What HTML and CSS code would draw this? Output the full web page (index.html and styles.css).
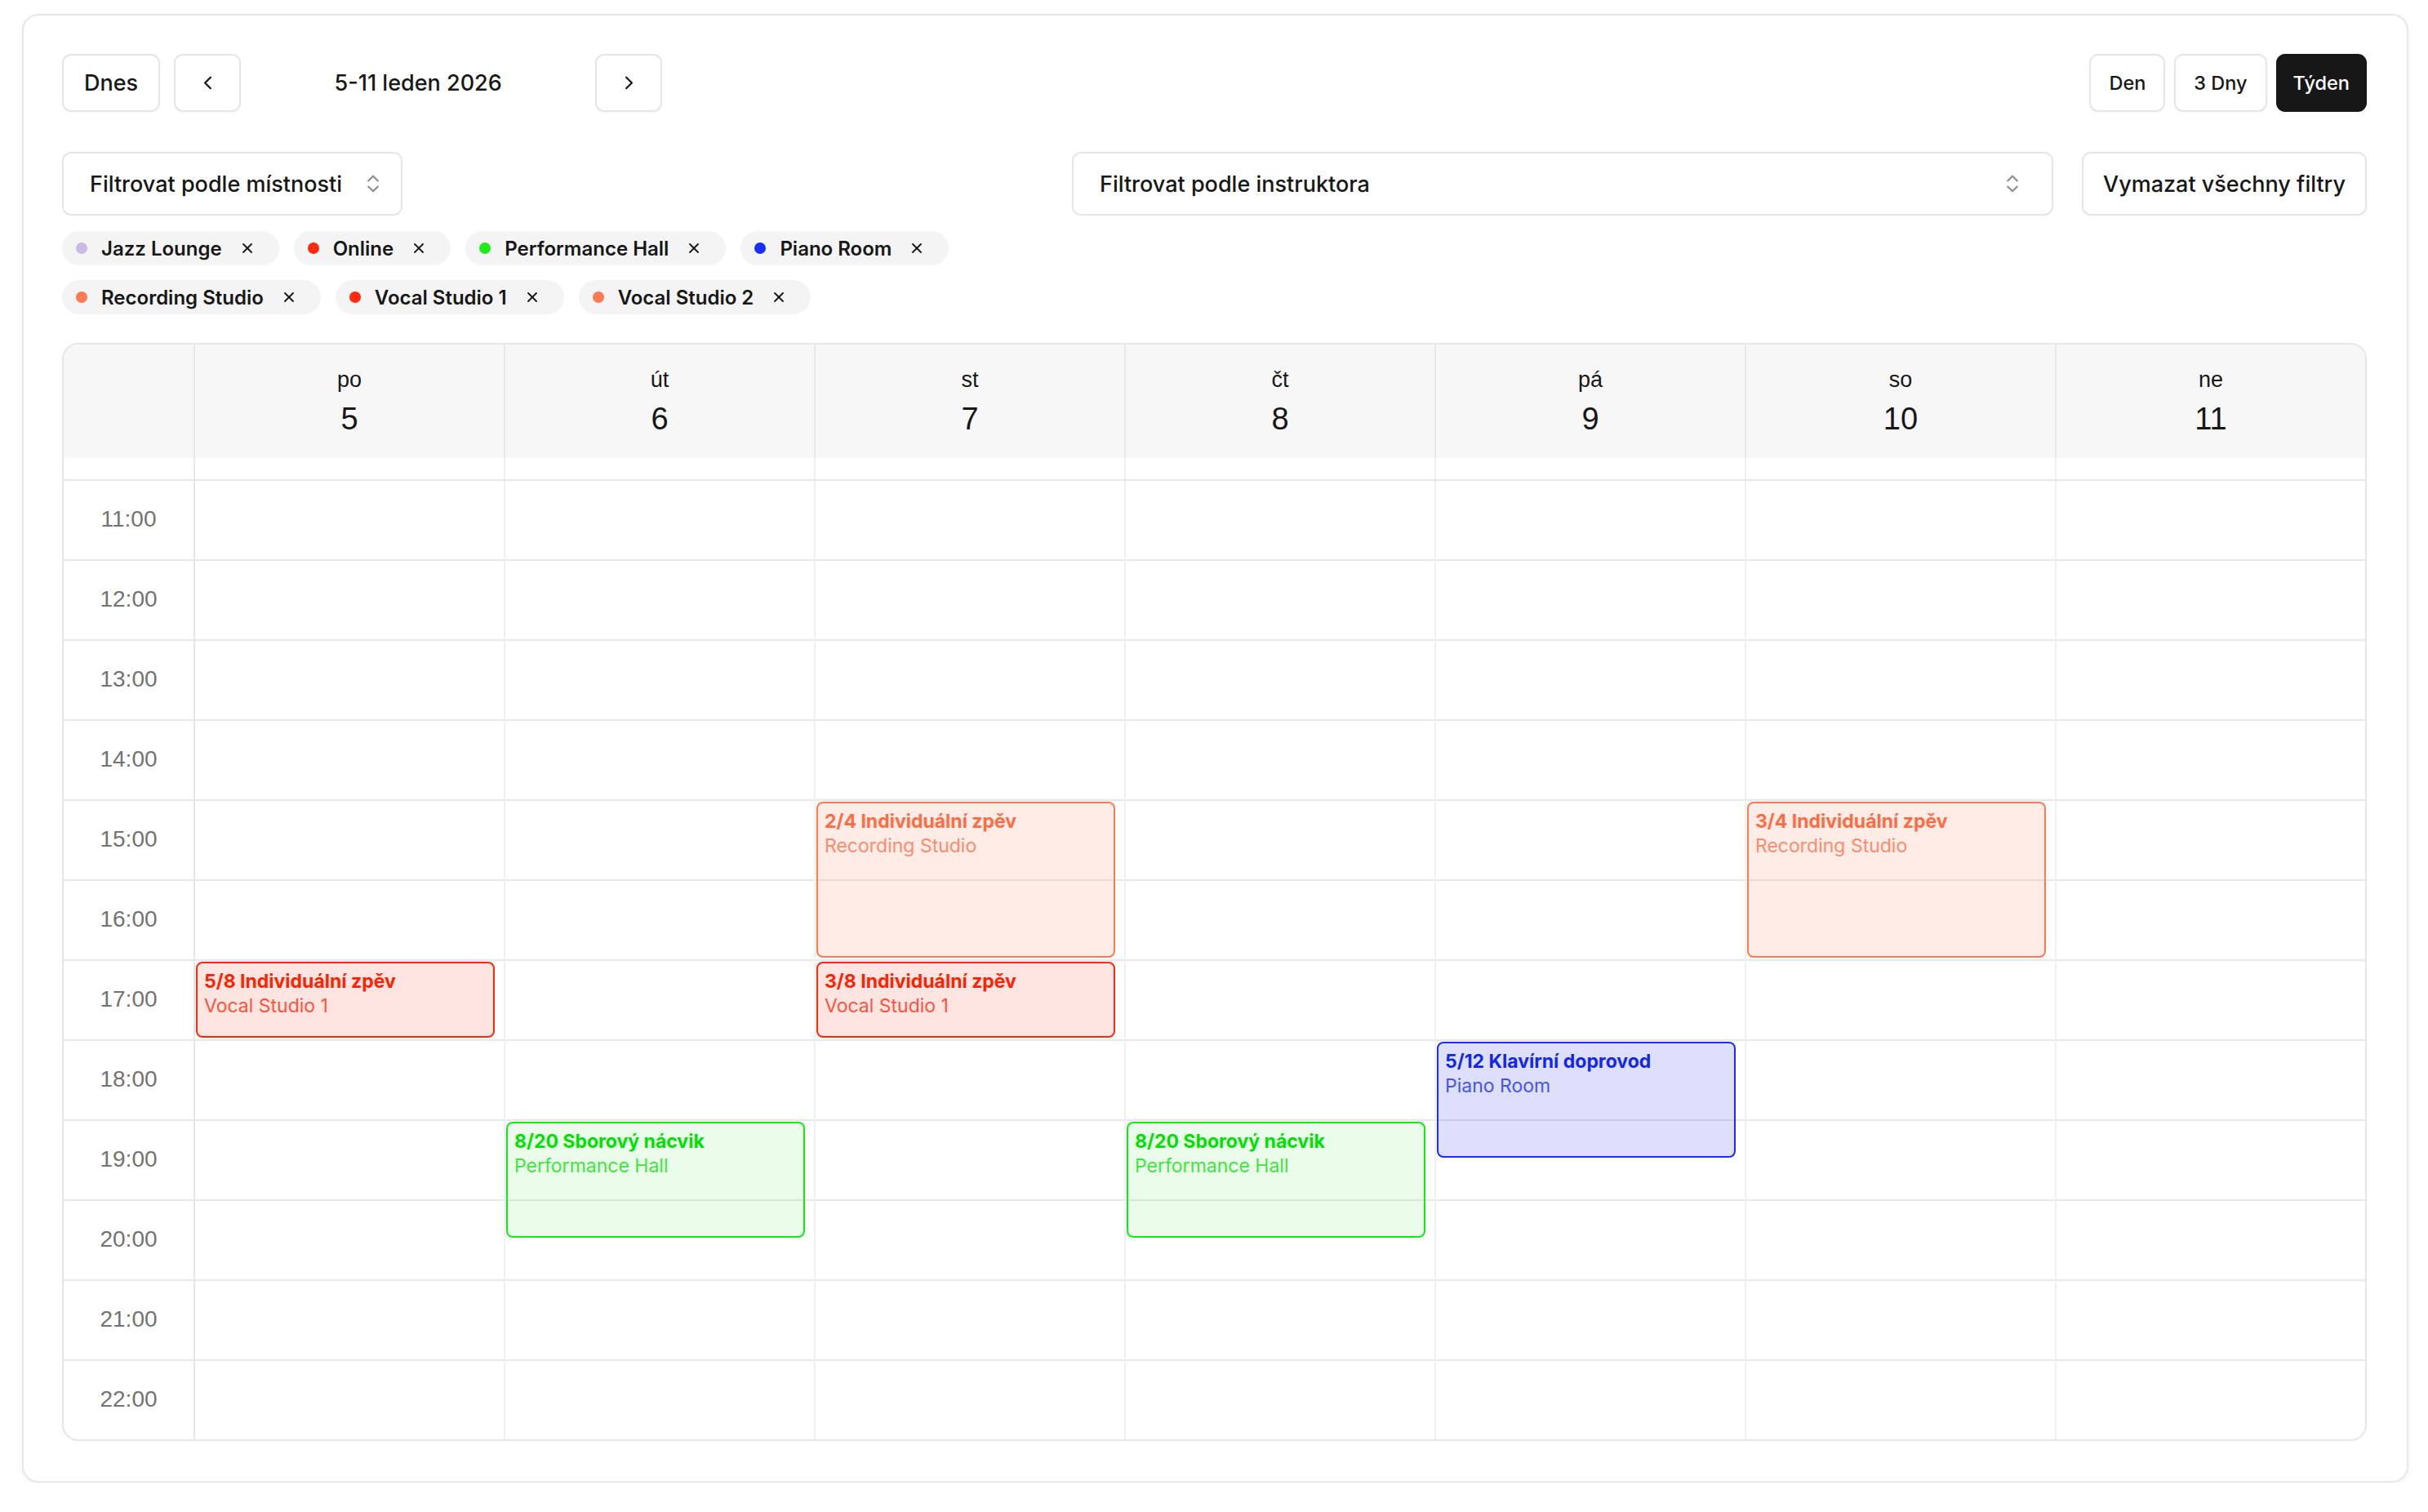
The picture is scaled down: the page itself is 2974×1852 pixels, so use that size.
FILE: index.html
```html
<!DOCTYPE html>
<html lang="cs">
<head>
  <meta charset="UTF-8" />
  <meta name="viewport" content="width=device-width, initial-scale=1.0"/>
  <title>Rozvrh</title>
  <link rel="stylesheet" href="styles.css">
</head>
<body>
  <div class="card">
    <!-- Navigation -->
    <div class="toolbar">
      <div class="nav">
        <button class="btn">Dnes</button>
        <button class="btn icon-btn">
          <svg width="27" height="27" viewBox="0 0 24 24" fill="none" stroke="currentColor" stroke-width="2" stroke-linecap="round" stroke-linejoin="round"><path d="m15 18-6-6 6-6"/></svg>
        </button>
        <div class="range">5-11 leden 2026</div>
        <button class="btn icon-btn">
          <svg width="27" height="27" viewBox="0 0 24 24" fill="none" stroke="currentColor" stroke-width="2" stroke-linecap="round" stroke-linejoin="round"><path d="m9 18 6-6-6-6"/></svg>
        </button>
      </div>
      <div class="views">
        <button class="btn view">Den</button>
        <button class="btn view">3 Dny</button>
        <button class="btn view active">Týden</button>
      </div>
    </div>

    <!-- Filtres -->
    <div class="filters">
      <div class="select room-select">
        <span>Filtrovat podle místnosti</span>
        <svg class="updown" width="28" height="28" viewBox="0 0 24 24" fill="none" stroke="currentColor" stroke-width="1.8" stroke-linecap="round" stroke-linejoin="round"><path d="m7 15 5 5 5-5"/><path d="m7 9 5-5 5 5"/></svg>
      </div>
      <div class="select instructor-select">
        <span>Filtrovat podle instruktora</span>
        <svg class="updown" width="28" height="28" viewBox="0 0 24 24" fill="none" stroke="currentColor" stroke-width="1.8" stroke-linecap="round" stroke-linejoin="round"><path d="m7 15 5 5 5-5"/><path d="m7 9 5-5 5 5"/></svg>
      </div>
      <button class="btn clear">Vymazat všechny filtry</button>
    </div>

    <div class="chips">
      <div class="chip"><span class="dot c-jazz"></span>Jazz Lounge<svg class="x" viewBox="0 0 24 24" fill="none" stroke="currentColor" stroke-width="2.2" stroke-linecap="round"><path d="M18 6 6 18"/><path d="m6 6 12 12"/></svg></div>
      <div class="chip"><span class="dot c-red"></span>Online<svg class="x" viewBox="0 0 24 24" fill="none" stroke="currentColor" stroke-width="2.2" stroke-linecap="round"><path d="M18 6 6 18"/><path d="m6 6 12 12"/></svg></div>
      <div class="chip"><span class="dot c-green"></span>Performance Hall<svg class="x" viewBox="0 0 24 24" fill="none" stroke="currentColor" stroke-width="2.2" stroke-linecap="round"><path d="M18 6 6 18"/><path d="m6 6 12 12"/></svg></div>
      <div class="chip"><span class="dot c-blue"></span>Piano Room<svg class="x" viewBox="0 0 24 24" fill="none" stroke="currentColor" stroke-width="2.2" stroke-linecap="round"><path d="M18 6 6 18"/><path d="m6 6 12 12"/></svg></div>
      <div class="chip"><span class="dot c-coral"></span>Recording Studio<svg class="x" viewBox="0 0 24 24" fill="none" stroke="currentColor" stroke-width="2.2" stroke-linecap="round"><path d="M18 6 6 18"/><path d="m6 6 12 12"/></svg></div>
      <div class="chip"><span class="dot c-red"></span>Vocal Studio 1<svg class="x" viewBox="0 0 24 24" fill="none" stroke="currentColor" stroke-width="2.2" stroke-linecap="round"><path d="M18 6 6 18"/><path d="m6 6 12 12"/></svg></div>
      <div class="chip"><span class="dot c-coral"></span>Vocal Studio 2<svg class="x" viewBox="0 0 24 24" fill="none" stroke="currentColor" stroke-width="2.2" stroke-linecap="round"><path d="M18 6 6 18"/><path d="m6 6 12 12"/></svg></div>
    </div>

    <!-- Calendrier de la semaine -->
    <div class="calendar">
      <div class="cal-row cal-head">
        <div class="gutter"></div>
        <div class="day-head"><div class="dname">po</div><div class="dnum">5</div></div>
        <div class="day-head"><div class="dname">út</div><div class="dnum">6</div></div>
        <div class="day-head"><div class="dname">st</div><div class="dnum">7</div></div>
        <div class="day-head"><div class="dname">čt</div><div class="dnum">8</div></div>
        <div class="day-head"><div class="dname">pá</div><div class="dnum">9</div></div>
        <div class="day-head"><div class="dname">so</div><div class="dnum">10</div></div>
        <div class="day-head"><div class="dname">ne</div><div class="dnum">11</div></div>
      </div>

      <div class="cal-row cal-allday">
        <div class="gutter"></div>
        <div class="allday"></div><div class="allday"></div><div class="allday"></div><div class="allday"></div>
        <div class="allday"></div><div class="allday"></div><div class="allday"></div>
      </div>

      <div class="cal-row cal-body">
        <div class="time-col">
          <div class="time">11:00</div><div class="time">12:00</div><div class="time">13:00</div>
          <div class="time">14:00</div><div class="time">15:00</div><div class="time">16:00</div>
          <div class="time">17:00</div><div class="time">18:00</div><div class="time">19:00</div>
          <div class="time">20:00</div><div class="time">21:00</div><div class="time">22:00</div>
        </div>

        <!-- po -->
        <div class="day-col">
          <div class="event ev-vocal" style="top: 589px; height: 93px;">
            <div class="ev-title">5/8 Individuální zpěv</div>
            <div class="ev-room">Vocal Studio 1</div>
          </div>
        </div>
        <!-- út -->
        <div class="day-col">
          <div class="event ev-hall" style="top: 785px; height: 142px;">
            <div class="ev-title">8/20 Sborový nácvik</div>
            <div class="ev-room">Performance Hall</div>
          </div>
        </div>
        <!-- st -->
        <div class="day-col">
          <div class="event ev-recording" style="top: 393px; height: 191px;">
            <div class="ev-title">2/4 Individuální zpěv</div>
            <div class="ev-room">Recording Studio</div>
          </div>
          <div class="event ev-vocal" style="top: 589px; height: 93px;">
            <div class="ev-title">3/8 Individuální zpěv</div>
            <div class="ev-room">Vocal Studio 1</div>
          </div>
        </div>
        <!-- čt -->
        <div class="day-col">
          <div class="event ev-hall" style="top: 785px; height: 142px;">
            <div class="ev-title">8/20 Sborový nácvik</div>
            <div class="ev-room">Performance Hall</div>
          </div>
        </div>
        <!-- pá -->
        <div class="day-col">
          <div class="event ev-piano" style="top: 687px; height: 142px;">
            <div class="ev-title">5/12 Klavírní doprovod</div>
            <div class="ev-room">Piano Room</div>
          </div>
        </div>
        <!-- so -->
        <div class="day-col">
          <div class="event ev-recording" style="top: 393px; height: 191px;">
            <div class="ev-title">3/4 Individuální zpěv</div>
            <div class="ev-room">Recording Studio</div>
          </div>
        </div>
        <!-- ne -->
        <div class="day-col"></div>
      </div>
    </div>
  </div>
</body>
</html>
```

FILE: styles.css
```css
/* Base */
body {
  margin: 0;
  font-family: Inter, "Liberation Sans", sans-serif;
  color: #171717;
  background: #fff;
}

* {
  box-sizing: border-box;
}

/* Carte principale */
.card {
  margin: 17px 24px 0 27px;
  border: 2px solid #e7e7e7;
  border-radius: 20px;
  padding: 47px 49px 49px 47px;
  box-shadow: 0 3px 8px rgba(0, 0, 0, 0.05);
}

/* Barre du haut */
.toolbar {
  display: flex;
  justify-content: space-between;
  align-items: center;
  height: 71px;
}

.nav {
  display: flex;
  align-items: center;
  gap: 17px;
}

.btn {
  height: 71px;
  padding: 0 25px;
  border: 2px solid #e6e6e6;
  border-radius: 11px;
  background: #fff;
  color: #171717;
  font-family: Inter, sans-serif;
  font-size: 27px;
  font-weight: 500;
  box-shadow: 0 1px 2px rgba(0, 0, 0, 0.04);
  cursor: pointer;
}

.icon-btn {
  width: 82px;
  padding: 0;
  display: flex;
  align-items: center;
  justify-content: center;
}

.range {
  width: 400px;
  text-align: center;
  font-size: 27px;
  font-weight: 500;
}

.views {
  display: flex;
  gap: 11px;
}

.btn.view {
  font-size: 23.5px;
  padding: 0 22px;
}

.btn.view.active {
  padding: 0 19px;
}

.btn.active {
  background: #171717;
  border-color: #171717;
  color: #fff;
}

/* Filtres */
.filters {
  display: flex;
  gap: 35px;
  margin-top: 49px;
  height: 78px;
}

.select {
  height: 78px;
  display: flex;
  align-items: center;
  justify-content: space-between;
  padding: 0 20px 0 32px;
  border: 2px solid #e6e6e6;
  border-radius: 11px;
  font-size: 27px;
  font-weight: 500;
  box-shadow: 0 1px 2px rgba(0, 0, 0, 0.04);
}

.updown {
  color: #8c8c8c;
  flex-shrink: 0;
}

.room-select {
  width: 417px;
}

.instructor-select {
  width: 1202px;
  margin-left: auto;
  padding-right: 34px;
}

.btn.clear {
  height: 78px;
  width: 349px;
  padding: 0;
}

/* Pastilles des salles */
.chips {
  display: flex;
  flex-wrap: wrap;
  gap: 18px 18px;
  max-width: 1202px;
  margin-top: 19px;
}

.chip {
  height: 42px;
  display: flex;
  align-items: center;
  padding: 0 29px 0 17px;
  border-radius: 999px;
  background: #f4f4f4;
  font-size: 24px;
  font-weight: 600;
}

.dot {
  width: 14px;
  height: 14px;
  border-radius: 50%;
  margin-right: 17px;
}

.x {
  width: 20px;
  height: 20px;
  margin-left: 21px;
}

.c-jazz { background: #cbb9e6; }
.c-red { background: #ff2a0d; }
.c-green { background: #1eec1e; }
.c-blue { background: #1a2dff; }
.c-coral { background: #ff7a52; }

/* Calendrier */
.calendar {
  margin-top: 35px;
  border: 2px solid #e6e6e6;
  border-radius: 20px;
  overflow: hidden;
  font-family: "Liberation Sans", Arial, sans-serif;
}

.cal-row {
  display: grid;
  grid-template-columns: 159px repeat(7, 1fr);
}

.cal-head {
  height: 139px;
  background: #f7f7f7;
}

.day-head {
  border-left: 2px solid #e8e8e8;
  display: flex;
  flex-direction: column;
  align-items: center;
  padding-top: 27px;
}

.dname {
  font-size: 27px;
  line-height: 32px;
}

.dnum {
  font-size: 38px;
  line-height: 46px;
  margin-top: 9px;
}

.cal-allday {
  height: 28px;
  border-bottom: 2px solid #e6e6e6;
}

.allday {
  border-left: 2px solid #f0f0f0;
}

.allday:nth-child(2) {
  border-left-color: #e8e8e8;
}

/* Lignes des heures */
.time-col,
.day-col {
  height: 1174px;
  background: repeating-linear-gradient(to bottom, transparent 0 96px, #e8e8e8 96px 98px);
}

.time {
  height: 98px;
  display: flex;
  align-items: center;
  justify-content: center;
  padding-bottom: 4px;
  font-size: 28px;
  color: #737373;
}

.day-col {
  position: relative;
  border-left: 2px solid #f0f0f0;
}

.day-col:nth-child(2) {
  border-left-color: #e6e6e6;
}

/* Evénements */
.event {
  position: absolute;
  left: 1px;
  right: 11px;
  border: 2px solid;
  border-radius: 8px;
  padding: 7px 8px;
  font-family: Inter, sans-serif;
  font-size: 23px;
  line-height: 30px;
  overflow: hidden;
}

.ev-title {
  font-weight: 700;
}

.ev-room {
  opacity: 0.75;
}

.ev-recording {
  color: #ff6b42;
  border-color: #ff7a52;
  background: rgba(255, 112, 72, 0.13);
}

.ev-vocal {
  color: #ff2200;
  border-color: #ff2a0d;
  background: rgba(255, 40, 20, 0.12);
}

.ev-hall {
  color: #00e000;
  border-color: #11ec11;
  background: rgba(20, 220, 20, 0.09);
}

.ev-piano {
  color: #1226ee;
  border-color: #1a2dff;
  background: rgba(30, 40, 240, 0.15);
}
```
